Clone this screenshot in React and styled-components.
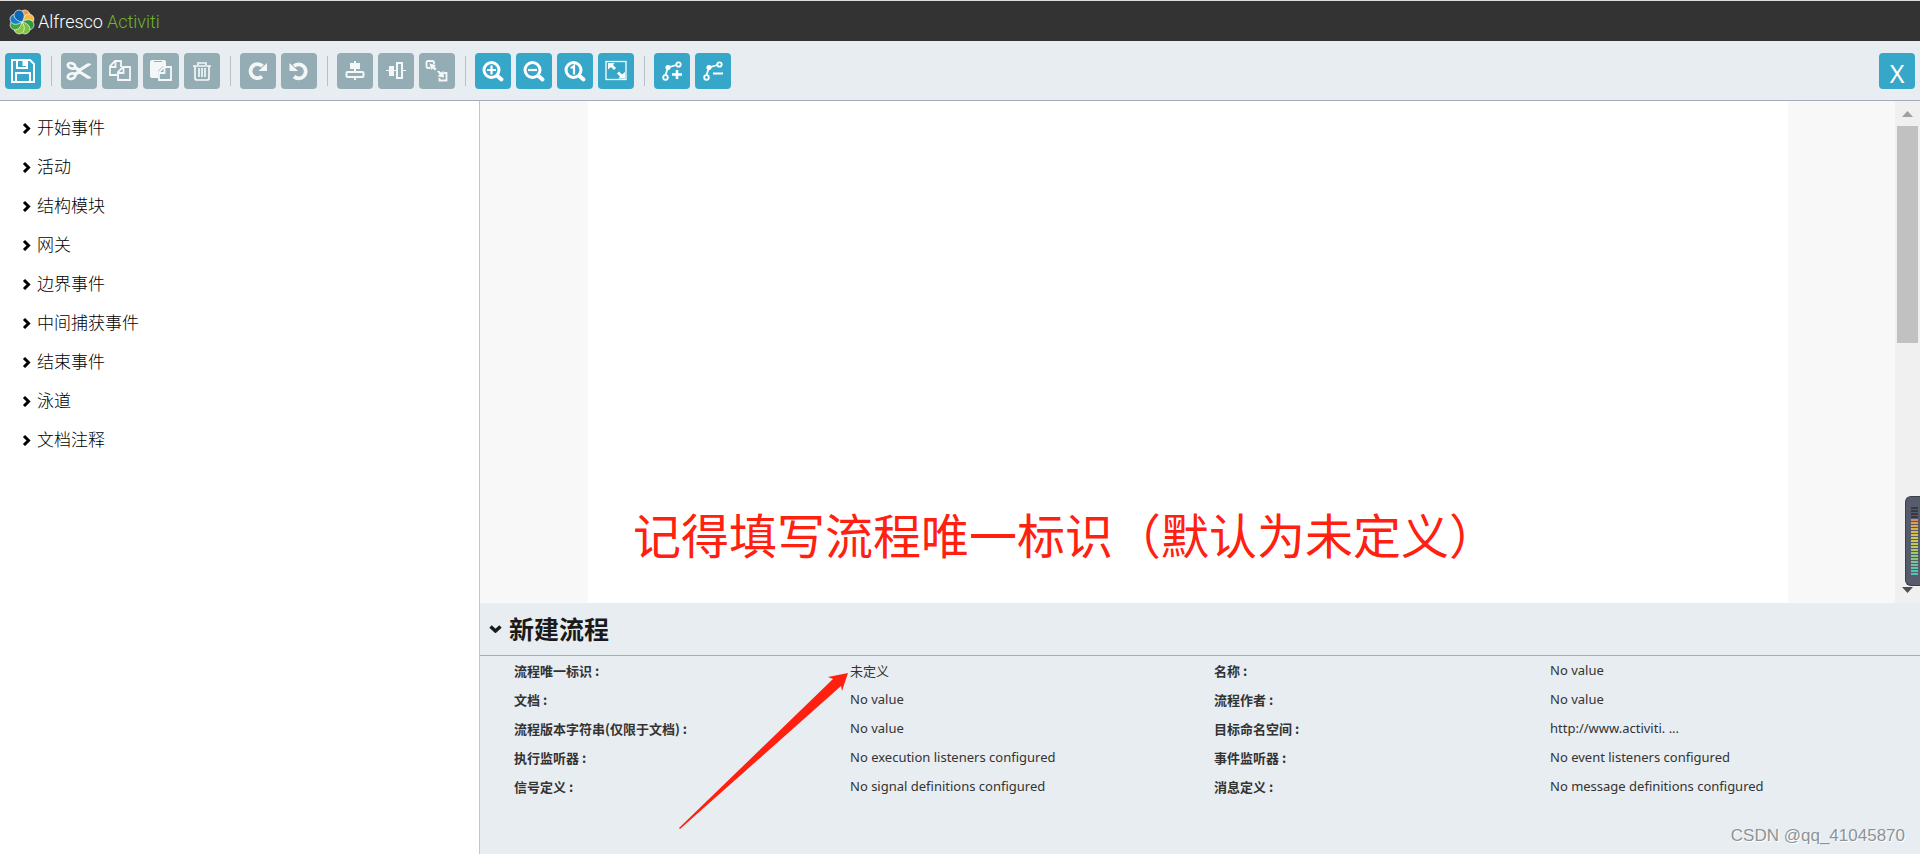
import styled, { createGlobalStyle } from "styled-components";

const GlobalStyles = createGlobalStyle`
  * {
    box-sizing: border-box;
  }

  body {
    margin: 0;
    background-color: #ffffff;
    color: #000000;
    font-family: "Noto Sans", "Noto Sans CJK SC", sans-serif;
  }
`;

const Page = styled.div`
  display: flex;
  flex-direction: column;
  min-height: 100vh;
`;

const Header = styled.header`
  display: flex;
  align-items: center;
  height: 41px;
  padding: 2px 9px 0;
  border-top: 1px solid #dddddd;
  background-color: #333333;
`;

const Brand = styled.a`
  display: flex;
  align-items: center;
  gap: 3px;
  color: #ffffff;
  font-family: Roboto, "Liberation Sans", sans-serif;
  font-size: 18px;
  font-weight: 300;
  line-height: 24px;
  text-decoration: none;
`;

const BrandName = styled.span`
  display: flex;
  gap: 4px;
`;

const Product = styled.span`
  color: #6fb52c;
`;

const Toolbar = styled.div`
  display: flex;
  align-items: center;
  gap: 5px;
  height: 60px;
  padding: 0 5px;
  border-bottom: 1px solid #a4acb9;
  background-color: #e8edf1;
`;

const Separator = styled.span`
  width: 1px;
  height: 30px;
  margin: 0 4px 0 5px;
  background-color: #b9c1c8;
`;

const ToolButton = styled.button`
  display: flex;
  align-items: center;
  justify-content: center;
  width: 36px;
  height: 36px;
  padding: 0;
  border: none;
  border-radius: 4px;
  background-color: ${(props) => (props.$muted ? "#94acb3" : "#36a7c8")};
  color: ${(props) => (props.$muted ? "#f4f7f8" : "#ffffff")};
`;

const CloseButton = styled(ToolButton)`
  margin-left: auto;
  padding-top: 4px;
  font-family: "Noto Sans", sans-serif;
  font-size: 25px;
`;

const Workspace = styled.main`
  display: flex;
  flex: 1;
`;

const Sidebar = styled.nav`
  width: 25%;
  padding: 6px 21px;
  border-right: 1px solid #c2c6cc;
`;

const Group = styled.button`
  display: flex;
  align-items: center;
  gap: 5px;
  width: 100%;
  height: 39px;
  padding: 0;
  border: none;
  background: none;
  color: #000000;
  font-family: "Noto Sans CJK SC", sans-serif;
  font-size: 17px;
  font-weight: 300;
`;

const Editor = styled.div`
  display: flex;
  flex: 1;
  flex-direction: column;
`;

const CanvasArea = styled.section`
  position: relative;
  display: flex;
  flex: 1;
  background-color: #f8f8f8;
`;

const Paper = styled.div`
  flex: 1;
  max-width: 1200px;
  margin: 0 auto;
  background-color: #ffffff;
`;

const Scrollbar = styled.div`
  display: flex;
  flex-direction: column;
  align-items: center;
  width: 25px;
  padding: 10px 2px;
  background-color: #f0f0f0;
`;

const Thumb = styled.div`
  width: 100%;
  height: 217px;
  margin: 9px 0 auto;
  background-color: #c1c1c1;
`;

const Note = styled.p`
  position: absolute;
  bottom: 34px;
  left: 153px;
  margin: 0;
  color: #ff2010;
  font-family: "Noto Sans CJK SC", sans-serif;
  font-size: 48px;
  line-height: 72px;
  white-space: nowrap;
`;

const Meter = styled.div`
  position: absolute;
  right: 0;
  bottom: 17px;
  display: flex;
  padding: 10px 2px 10px 5px;
  border: 1px solid #3a3f49;
  border-right: none;
  border-radius: 6px 0 0 6px;
  background-color: #565c6b;
`;

const Properties = styled.section`
  position: relative;
  padding-bottom: 53px;
  background-color: #e8edf1;
`;

const PropertiesTitle = styled.h2`
  display: flex;
  align-items: center;
  height: 53px;
  margin: 0;
  padding-bottom: 2px;
  border-bottom: 1px solid #a4acc0;
`;

const TitleToggle = styled.button`
  display: flex;
  align-items: center;
  gap: 6px;
  padding: 0 9px;
  border: none;
  background: none;
  color: #1a1a1a;
  font-family: "Noto Sans CJK SC", sans-serif;
  font-size: 25px;
  font-weight: 700;
`;

const PropertyGrid = styled.dl`
  display: grid;
  grid-template-columns: 12fr 13fr 12fr 13fr;
  grid-auto-rows: 29px;
  align-items: center;
  margin: 0;
  padding: 0 6px 0 34px;
  color: #333333;
`;

const Label = styled.dt`
  font-family: "Noto Sans CJK SC", sans-serif;
  font-size: 13px;
  font-weight: 700;
`;

const Value = styled.dd`
  margin: 0;
  padding-bottom: 1px;
  font-size: 13px;
`;

const Arrow = styled.svg`
  position: absolute;
  top: 70px;
  left: 199px;
`;

const Watermark = styled.span`
  position: absolute;
  right: 15px;
  bottom: 6px;
  color: #8e9397;
  font-family: "Liberation Sans", sans-serif;
  font-size: 17px;
  line-height: 24px;
  text-shadow: 1px 1px 0 #ffffff;
`;

const ICONS = {
  save: (
    <path
      fill="none"
      stroke="currentColor"
      strokeWidth="2"
      d="M7 7H25L29 11V29H7ZM12 7V15H22V7M18.5 7V13M20 7V13M11 29V20H25V29"
    />
  ),
  cut: (
    <g fill="none" stroke="currentColor">
      <ellipse cx="10.5" cy="12.8" rx="3.8" ry="2.6" strokeWidth="2.8" transform="rotate(18 10.5 12.8)" />
      <ellipse cx="10.5" cy="23.2" rx="3.8" ry="2.6" strokeWidth="2.8" transform="rotate(-18 10.5 23.2)" />
      <path strokeWidth="3.6" d="M13.5 14.5 19 17.5M13.5 21.5 19 18.5" />
      <path fill="currentColor" stroke="none" d="M16 17 26 10.5Q28.5 9.5 30.5 11.5L20 18 30.5 24.5Q28.5 26.5 26 25.5L16 19Z" />
    </g>
  ),
  copy: (
    <path
      fill="none"
      stroke="currentColor"
      strokeWidth="1.8"
      d="M15 22H8V13L13 8H19V14M8 14H13.5V8M16 27V19L21 14H28V27ZM16 20H21.5V14"
    />
  ),
  paste: (
    <g>
      <path fill="currentColor" d="M7 9Q7 7 9 7H21Q23 7 23 9V13H20L15 18V25H9Q7 25 7 23Z" />
      <path stroke="#94acb3" strokeWidth="1" d="M11 8.5H19" />
      <path fill="#94acb3" stroke="currentColor" strokeWidth="1.8" d="M16 27V19L21 14H28V27ZM16 20H21.5V14" />
    </g>
  ),
  trash: (
    <path
      fill="none"
      stroke="currentColor"
      strokeWidth="1.7"
      d="M9 13H27M14 12V10H22V12M11 13V25Q11 27 13 27H23Q25 27 25 25V13M15 15V24M18 15V24M21 15V24"
    />
  ),
  redo: (
    <g>
      <path fill="none" stroke="currentColor" strokeWidth="3.8" d="M22.5 13.2A7 7 0 1 0 22 23.5" />
      <path fill="currentColor" d="M27 10V18H18.5Z" />
    </g>
  ),
  undo: (
    <g>
      <path fill="none" stroke="currentColor" strokeWidth="3.8" d="M13 13.2A7 7 0 1 1 13 23.5" />
      <path fill="currentColor" d="M8.5 10V18H17Z" />
    </g>
  ),
  alignVertical: (
    <g>
      <path fill="currentColor" d="M13 10H23V16H13ZM17 8H19V19H17ZM17 25H19V27H17Z" />
      <rect x="9.5" y="19" width="17" height="5" rx="1" fill="none" stroke="currentColor" strokeWidth="2" />
    </g>
  ),
  alignHorizontal: (
    <g>
      <path fill="currentColor" d="M8 17H19V18H8ZM11 13H16V23H11ZM25 17H28V18H25Z" />
      <rect x="19" y="10" width="5" height="15" fill="none" stroke="currentColor" strokeWidth="2" />
    </g>
  ),
  sameSize: (
    <g>
      <path
        fill="none"
        stroke="currentColor"
        strokeWidth="1.8"
        d="M11 15H9Q7.5 15 7.5 13.5V9.5Q7.5 8 9 8H13.5Q15 8 15 9.5V11M25 20H27.5V27.5H20.5V25"
      />
      <path fill="currentColor" d="M10.5 10.5 17 12 15.5 13.6 17.5 16 16 17.5 13.6 15.5 12 17ZM18 18 20.5 18 21.8 19.5 24.5 18 25 24.5 18.5 23.5 20.5 21.5Z" />
    </g>
  ),
  zoomIn: (
    <g fill="none" stroke="currentColor">
      <circle cx="16.5" cy="17" r="7.5" strokeWidth="3" />
      <path strokeWidth="4" strokeLinecap="round" d="M22.5 23 26.5 26.5" />
      <path strokeWidth="2.2" d="M12 17H21M16.5 12.5V21.5" />
    </g>
  ),
  zoomOut: (
    <g fill="none" stroke="currentColor">
      <circle cx="16.5" cy="17" r="7.5" strokeWidth="3" />
      <path strokeWidth="4" strokeLinecap="round" d="M22.5 23 26.5 26.5" />
      <path strokeWidth="2.2" d="M12 17H21" />
    </g>
  ),
  zoomActual: (
    <g fill="none" stroke="currentColor">
      <circle cx="16.5" cy="17" r="7.5" strokeWidth="3" />
      <path strokeWidth="4" strokeLinecap="round" d="M22.5 23 26.5 26.5" />
      <path strokeWidth="2.2" d="M13.5 14.5H15.5L17 13V21.5" />
    </g>
  ),
  zoomFit: (
    <g>
      <rect x="8" y="8.5" width="20" height="18" fill="none" stroke="currentColor" strokeWidth="1.3" />
      <path fill="currentColor" d="M10 10H16.5L15 12 18 15 16 17 13 14 10 16.5ZM27 25.5H20.5L22 23.5 19 20.5 21 18.5 24 21.5 27 19Z" />
    </g>
  ),
  addBend: (
    <g fill="none" stroke="currentColor">
      <path strokeWidth="1.8" d="M11.5 22 14 14.5 22.5 12" />
      <circle cx="14" cy="14.5" r="2.2" fill="currentColor" />
      <circle cx="11.5" cy="24.5" r="2.3" strokeWidth="1.8" />
      <circle cx="24.5" cy="11.5" r="2.2" strokeWidth="1.8" />
      <path strokeWidth="2.6" d="M18 21.5H28M23 17V26" />
    </g>
  ),
  removeBend: (
    <g fill="none" stroke="currentColor">
      <path strokeWidth="1.8" d="M11.5 22 14 14.5 22.5 12" />
      <circle cx="14" cy="14.5" r="2.2" fill="currentColor" />
      <circle cx="11.5" cy="24.5" r="2.3" strokeWidth="1.8" />
      <circle cx="24.5" cy="11.5" r="2.2" strokeWidth="1.8" />
      <path strokeWidth="2" d="M18 20.5H28" />
    </g>
  ),
};

const TOOL_GROUPS = [
  [{ icon: "save", label: "Save" }],
  [
    { icon: "cut", label: "Cut", muted: true },
    { icon: "copy", label: "Copy", muted: true },
    { icon: "paste", label: "Paste", muted: true },
    { icon: "trash", label: "Delete", muted: true },
  ],
  [
    { icon: "redo", label: "Redo", muted: true },
    { icon: "undo", label: "Undo", muted: true },
  ],
  [
    { icon: "alignVertical", label: "Align vertical", muted: true },
    { icon: "alignHorizontal", label: "Align horizontal", muted: true },
    { icon: "sameSize", label: "Same size", muted: true },
  ],
  [
    { icon: "zoomIn", label: "Zoom in" },
    { icon: "zoomOut", label: "Zoom out" },
    { icon: "zoomActual", label: "Zoom to actual size" },
    { icon: "zoomFit", label: "Zoom to fit" },
  ],
  [
    { icon: "addBend", label: "Add bend-point" },
    { icon: "removeBend", label: "Remove bend-point" },
  ],
];

const GROUPS = [
  "开始事件",
  "活动",
  "结构模块",
  "网关",
  "边界事件",
  "中间捕获事件",
  "结束事件",
  "泳道",
  "文档注释",
];

const PROPERTIES = [
  ["流程唯一标识 :", "未定义"],
  ["名称 :", "No value"],
  ["文档 :", "No value"],
  ["流程作者 :", "No value"],
  ["流程版本字符串(仅限于文档) :", "No value"],
  ["目标命名空间 :", "http://www.activiti. ..."],
  ["执行监听器 :", "No execution listeners configured"],
  ["事件监听器 :", "No event listeners configured"],
  ["信号定义 :", "No signal definitions configured"],
  ["消息定义 :", "No message definitions configured"],
];

// clockwise from the top
const PETALS = [
  "#f7962f",
  "#fbb744",
  "#2f9646",
  "#7dc142",
  "#8cc63f",
  "#3fa648",
  "#1b7fc4",
  "#0b67b2",
];

const METER_COLORS = [
  "#343945", "#343945", "#343945", "#343945", "#e08a5a", "#e09a55",
  "#dfa650", "#dcb04c", "#d9b94a", "#d6c24a", "#d2c84c", "#cacb50",
  "#c0cb56", "#b4ca5e", "#a8c966", "#9cc870", "#90c77a", "#84c686",
  "#78c592", "#6cc49c", "#60c4a6", "#56c4ae", "#4cc4b4",
];

function LogoMark() {
  return (
    <svg width="26" height="26" viewBox="0 0 26 26" aria-hidden="true">
      {PETALS.map((color, index) => (
        <path
          key={color}
          fill={color}
          stroke="#ffffff"
          strokeWidth="0.6"
          transform={`rotate(${index * 45 + 22} 13 13)`}
          d="M13 13C10 11 8 8.5 8 5.5A5 5 0 0 1 18 5.5C18 8.5 16 11 13 13Z"
        />
      ))}
    </svg>
  );
}

function ToolIcon({ name }) {
  return (
    <svg width="36" height="36" viewBox="0 0 36 36" aria-hidden="true">
      {ICONS[name]}
    </svg>
  );
}

function App() {
  return (
    <>
      <GlobalStyles />
      <Page>
        <Header>
          <Brand href="#">
            <LogoMark />
            <BrandName>
              <span>Alfresco</span>
              <Product>Activiti</Product>
            </BrandName>
          </Brand>
        </Header>

        <Toolbar role="toolbar">
          {TOOL_GROUPS.map((tools, index) => [
            index > 0 && <Separator key={`separator-${index}`} />,
            ...tools.map((tool) => (
              <ToolButton
                key={tool.icon}
                type="button"
                aria-label={tool.label}
                $muted={tool.muted}
              >
                <ToolIcon name={tool.icon} />
              </ToolButton>
            )),
          ])}
          <CloseButton type="button">X</CloseButton>
        </Toolbar>

        <Workspace>
          <Sidebar>
            {GROUPS.map((name) => (
              <Group key={name} type="button">
                <svg width="11" height="14" viewBox="0 0 11 14" aria-hidden="true">
                  <path fill="none" stroke="#000000" strokeWidth="3" d="M3 4 7.5 8.5 3 13" />
                </svg>
                {name}
              </Group>
            ))}
          </Sidebar>

          <Editor>
            <CanvasArea>
              <Paper />
              <Scrollbar>
                <svg width="11" height="6" viewBox="0 0 11 6" aria-hidden="true">
                  <path fill="#a0a0a0" d="M0 6 5.5 0 11 6Z" />
                </svg>
                <Thumb />
                <svg width="11" height="6" viewBox="0 0 11 6" aria-hidden="true">
                  <path fill="#505050" d="M0 0H11L5.5 6Z" />
                </svg>
              </Scrollbar>
              <Note>记得填写流程唯一标识（默认为未定义）</Note>
              <Meter>
                <svg width="7" height="68" viewBox="0 0 7 68" aria-hidden="true">
                  {METER_COLORS.map((color, index) => (
                    <rect key={index} y={index * 3} width="7" height="2" fill={color} />
                  ))}
                </svg>
              </Meter>
            </CanvasArea>

            <Properties>
              <PropertiesTitle>
                <TitleToggle type="button">
                  <svg width="14" height="10" viewBox="0 0 14 10" aria-hidden="true">
                    <path fill="none" stroke="#1a1a1a" strokeWidth="3.5" d="M1.500 3.5 6.5 8 11.5 3.5" />
                  </svg>
                  新建流程
                </TitleToggle>
              </PropertiesTitle>
              <PropertyGrid>
                {PROPERTIES.map(([label, value]) => [
                  <Label key={label}>{label}</Label>,
                  <Value key={`${label}-value`}>{value}</Value>,
                ])}
              </PropertyGrid>
              <Arrow width="170" height="156" viewBox="0 0 170 156" aria-hidden="true">
                <path fill="#ff2010" d="M169 0 149 4 154 6 0 155 1 156 162 13 163 18Z" />
              </Arrow>
              <Watermark>CSDN @qq_41045870</Watermark>
            </Properties>
          </Editor>
        </Workspace>
      </Page>
    </>
  );
}

export default App;
